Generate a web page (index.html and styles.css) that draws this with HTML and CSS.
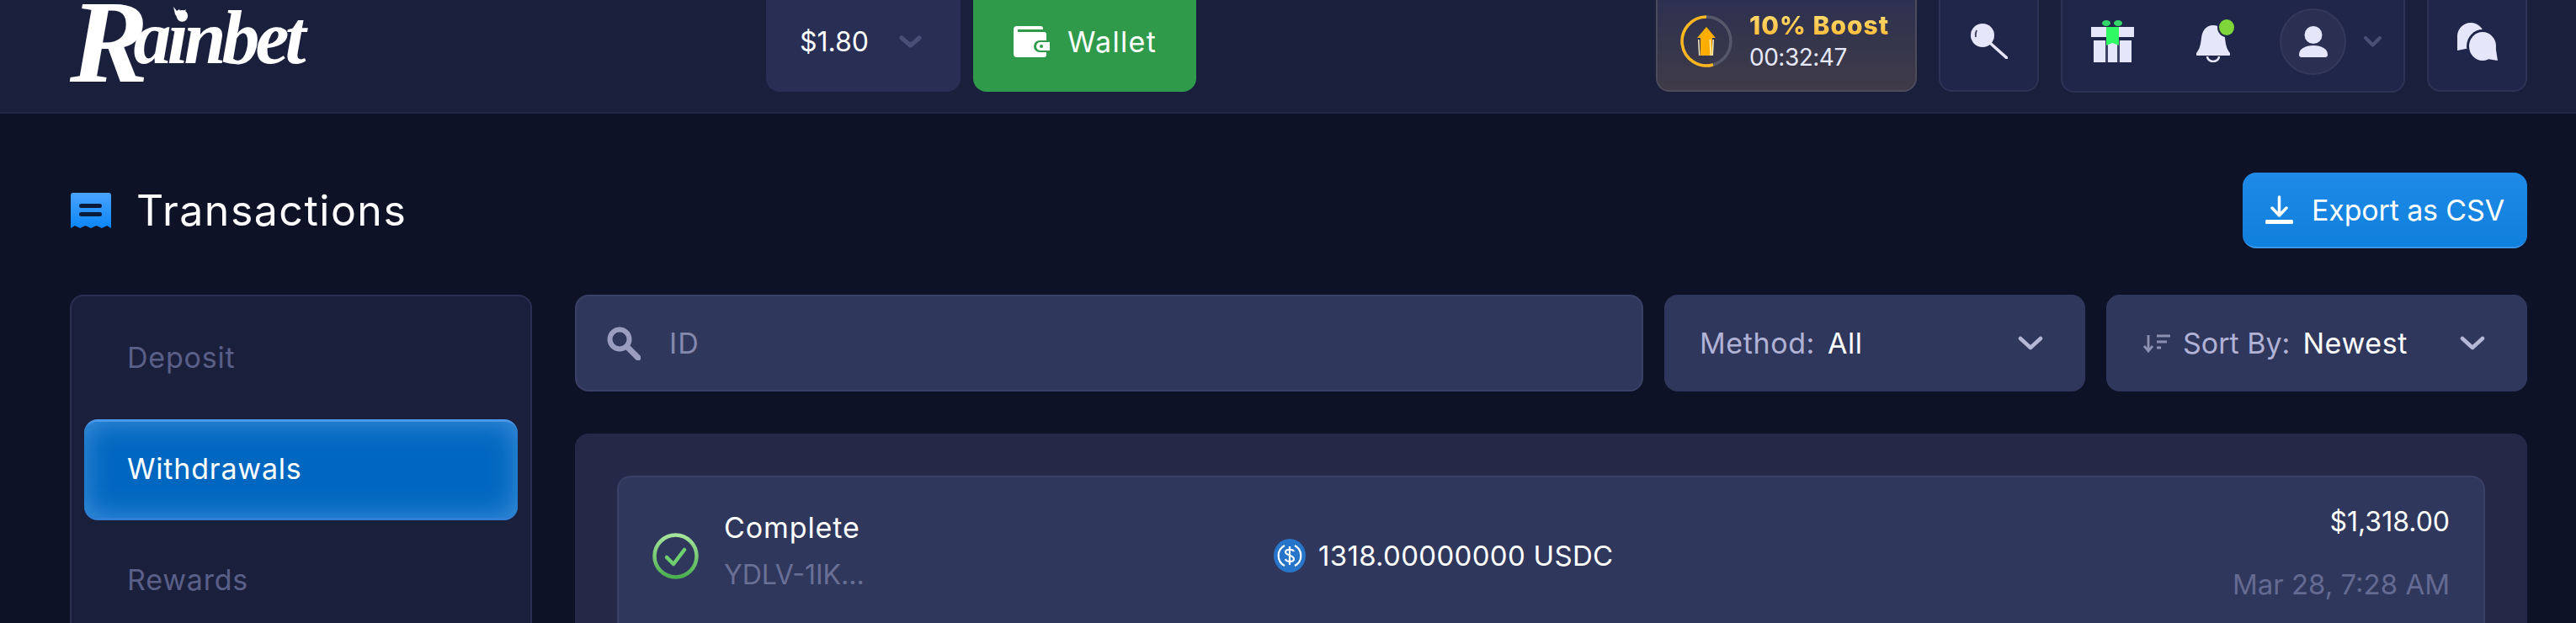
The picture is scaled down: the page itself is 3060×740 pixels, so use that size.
FILE: index.html
```html
<!DOCTYPE html>
<html lang="en">
<head>
<meta charset="utf-8">
<title>Transactions</title>
<link rel="stylesheet" href="styles.css">
</head>
<body>
<header class="topbar">
  <div class="logo">Rainbet
    <svg class="logo-crown" viewBox="0 0 18 13"><path d="M1 0l4 5 3-2 2 4 6-4-3 8-4 2H6L3 9z" fill="#fff"/></svg>
  </div>
  <div class="wallet-group">
    <div class="balance"><span>$1.80</span>
      <svg class="chev-dim" viewBox="0 0 27 15"><path d="M3 3l10.500 9L24 3" fill="none" stroke="#4a4f78" stroke-width="5" stroke-linecap="round" stroke-linejoin="round"/></svg>
    </div>
    <div class="wallet-btn">
      <svg class="wallet-icon" viewBox="0 0 43 37"><path d="M4 0h28a3 3 0 0 1 3 3v1H5v3h31a3 3 0 0 1 3 3v7H31a7 7 0 0 0 0 14h8v3a3 3 0 0 1-3 3H4a4 4 0 0 1-4-4V4a4 4 0 0 1 4-4z" fill="#fff"/><path d="M32 19h11v10H32a5 5 0 0 1 0-10z" fill="#fff"/><circle cx="33" cy="24" r="2" fill="#309a4b"/></svg>
      <span>Wallet</span>
    </div>
  </div>
  <div class="actions">
    <div class="boost">
      <svg class="boost-ring" viewBox="0 0 62 62">
        <circle cx="31" cy="31" r="29" fill="none" stroke="#55576a" stroke-width="3.500"/>
        <path d="M31 2A29 29 0 1 0 39 58.900" fill="none" stroke="#fdb71e" stroke-width="3.500"/>
        <path d="M31 14l11 13h-4v21H24V27h-4z" fill="#ffae00"/>
        <path d="M21 29l1 19h1.500l-1-19zM40 29l-1 19h-1.500l1-19zM34.500 29l1 19h1.500l-1-19z" fill="#fff0c0"/>
      </svg>
      <div class="boost-text">
        <div class="boost-title">10% Boost</div>
        <div class="boost-time">00:32:47</div>
      </div>
    </div>
    <div class="icon-btn search-btn">
      <svg class="lolly" viewBox="0 0 44 42"><path d="M24 24l19 17" stroke="#e6e6fa" stroke-width="3.500" stroke-linecap="round"/><circle cx="14" cy="14" r="14" fill="#e6e6fa"/><path d="M7 8q-2 4-1 8" stroke="#3a3f5e" stroke-width="1.800" fill="none"/></svg>
    </div>
    <div class="tools">
      <svg class="gift" viewBox="0 0 51 50">
        <path d="M0 8h51v12H0zM3 24h45v26H3z" fill="#e6e6fa"/>
        <path d="M17 24h3v26h-3zM31 24h3v26h-3z" fill="#3d4266"/>
        <path d="M18 8h15v22l-7.500-3-7.500 3z" fill="#2ffa63"/>
        <ellipse cx="18" cy="3.500" rx="5" ry="3.500" fill="#35d66b"/><ellipse cx="32" cy="3.500" rx="5" ry="3.500" fill="#35d66b"/>
      </svg>
      <div class="bell-wrap">
        <svg class="bell" viewBox="0 0 40 44"><path d="M20 0c9 0 13 7 14 15 1 9 2 13 6 18 1 2 0 3-2 3H2c-2 0-3-1-2-3 4-5 5-9 6-18C7 7 11 0 20 0z" fill="#e6e6fa"/><path d="M13 37a7 6 0 0 0 14 0" stroke="#e6e6fa" stroke-width="2.500" fill="none"/></svg>
        <span class="bell-dot"></span>
      </div>
      <div class="avatar">
        <svg class="person" viewBox="0 0 34 37"><circle cx="17" cy="10.500" r="10.500" fill="#e6e6fa"/><path d="M3 37a3 3 0 0 1-3-3c0-7 7-11 17-11s17 4 17 11a3 3 0 0 1-3 3z" fill="#e6e6fa"/></svg>
      </div>
      <svg class="chev-small" viewBox="0 0 21 13"><path d="M2 2l8.500 8.500L19 2" fill="none" stroke="#4a4f78" stroke-width="4" stroke-linecap="round" stroke-linejoin="round"/></svg>
    </div>
    <div class="icon-btn chat-btn">
      <svg class="chat" viewBox="0 0 48 45">
        <ellipse cx="16" cy="16" rx="16" ry="16" fill="#e6e6fa"/><path d="M0 14v19l10-2z" fill="#e6e6fa"/>
        <ellipse cx="30" cy="28" rx="17.500" ry="18.500" fill="#e6e6fa" stroke="#20264a" stroke-width="3"/>
        <path d="M45 26l3 19-12-2z" fill="#e6e6fa"/>
      </svg>
    </div>
  </div>
</header>

<main class="page">
  <div class="title-row">
    <div class="title">
      <svg class="title-icon" viewBox="0 0 49 42">
        <defs><linearGradient id="rcpt" x1="0" y1="0" x2="0" y2="1"><stop offset="0" stop-color="#4aa3ff"/><stop offset="1" stop-color="#0b86f5"/></linearGradient></defs>
        <path d="M3 0h43a3 3 0 0 1 3 3v39l-5-3-6 3-6.500-3-6.500 3-6.500-3-6.500 3-6-3-5 3V3a3 3 0 0 1 3-3z" fill="url(#rcpt)"/>
        <rect x="11" y="13" width="27" height="5" rx="2.500" fill="#0c1a3a"/><rect x="11" y="23" width="27" height="5" rx="2.500" fill="#0c1a3a"/>
      </svg>
      <h1>Transactions</h1>
    </div>
    <div class="export">
      <svg class="export-icon" viewBox="0 0 33 34"><path d="M16.500 2v21M8 15l8.500 9 8.500-9" fill="none" stroke="#fff" stroke-width="3.500" stroke-linecap="round" stroke-linejoin="round"/><rect x="0" y="29" width="33" height="5" rx="1.500" fill="#fff"/></svg>
      <span>Export as CSV</span>
    </div>
  </div>

  <div class="content">
    <nav class="sidebar">
      <div class="nav-item">Deposit</div>
      <div class="nav-item nav-active">Withdrawals</div>
      <div class="nav-item">Rewards</div>
    </nav>
    <section class="list">
      <div class="toolbar">
        <div class="search">
          <svg class="search-icon" viewBox="0 0 40 40"><circle cx="15" cy="15" r="11.500" fill="none" stroke="#9a9dc0" stroke-width="6"/><path d="M24 24l13 13" stroke="#9a9dc0" stroke-width="7" stroke-linecap="round"/></svg>
          <span>ID</span>
        </div>
        <div class="select">
          <div class="select-label"><span class="dim">Method:</span><span class="val">All</span></div>
          <svg class="chev" viewBox="0 0 30 17"><path d="M3 3l12 11L27 3" fill="none" stroke="#b6b8d8" stroke-width="4.500" stroke-linecap="round" stroke-linejoin="round"/></svg>
        </div>
        <div class="select select-sort">
          <div class="select-label">
            <svg class="sort-icon" viewBox="0 0 33 22"><path d="M7 1v18M2 14l5 6 5-6" fill="none" stroke="#8c8eb2" stroke-width="2.800"/><path d="M17 2h16M17 9h12M17 16h5" stroke="#8c8eb2" stroke-width="3"/></svg>
            <span class="dim">Sort By:</span><span class="val">Newest</span>
          </div>
          <svg class="chev" viewBox="0 0 30 17"><path d="M3 3l12 11L27 3" fill="none" stroke="#b6b8d8" stroke-width="4.500" stroke-linecap="round" stroke-linejoin="round"/></svg>
        </div>
      </div>
      <div class="panel">
        <div class="row">
          <div class="status">
            <svg class="check" viewBox="0 0 55 55">
              <defs><linearGradient id="chk" x1="0" y1="0" x2="0" y2="1"><stop offset="0" stop-color="#a6e59b"/><stop offset="1" stop-color="#4caf50"/></linearGradient></defs>
              <circle cx="27.500" cy="27.500" r="25" fill="none" stroke="url(#chk)" stroke-width="4.500"/>
              <path d="M17 29l8 8 13-17" fill="none" stroke="#6fd06f" stroke-width="4.500" stroke-linecap="round" stroke-linejoin="round"/>
            </svg>
            <div class="status-text">
              <div class="status-title">Complete</div>
              <div class="status-id">YDLV-1IK...</div>
            </div>
          </div>
          <div class="amount">
            <svg class="usdc" viewBox="0 0 38 40">
              <ellipse cx="19" cy="20" rx="19" ry="20" fill="#2775ca"/>
              <path d="M13 8a13.500 13.500 0 0 0 0 24M25 8a13.500 13.500 0 0 1 0 24" fill="none" stroke="#fff" stroke-width="2.200"/>
              <path d="M24 15c-1-3-9-3-10 0-1 5 10 4 10 9 0 4-9 4-10 0M19 9v22" fill="none" stroke="#fff" stroke-width="2.200"/>
            </svg>
            <span>1318.00000000 USDC</span>
          </div>
          <div class="meta">
            <div class="meta-usd">$1,318.00</div>
            <div class="meta-date">Mar 28, 7:28 AM</div>
          </div>
        </div>
      </div>
    </section>
  </div>
</main>
</body>
</html>
```
FILE: styles.css
```css
* { box-sizing: border-box; }
html, body { margin: 0; height: 740px; overflow: hidden; }
body {
  background: #0e1226;
  color: #fff;
  font-family: Inter, "Open Sans", sans-serif;
  font-size: 32px;
}
svg { display: block; flex: none; }

/* header */
.topbar {
  height: 135px;
  background: #1a1f3c;
  border-bottom: 2px solid #22274a;
  display: flex;
  align-items: flex-start;
  padding: 0 58px 0 83px;
  overflow: hidden;
}
.logo {
  position: relative;
  width: 279px;
  height: 98px;
  margin-right: 548px;
  font-family: "Liberation Serif", serif;
  font-size: 90px;
  font-style: italic;
  font-weight: 700;
  line-height: 90px;
  letter-spacing: -5px;
  color: #fff;
  white-space: nowrap;
}
.logo::first-letter {
  font-size: 140px;
  line-height: 60px;
  vertical-align: -22px;
  letter-spacing: 0;
  margin-right: -18px;
}
.logo-crown { position: absolute; left: 122px; top: 8px; width: 18px; height: 13px; }
.wallet-group { display: flex; gap: 15px; margin-top: -20px; }
.balance {
  width: 231px;
  height: 129px;
  padding: 9px 46px 0 40px;
  background: #292e55;
  border-radius: 0 0 16px 16px;
  display: flex;
  align-items: center;
  justify-content: space-between;
}
.chev-dim { width: 27px; height: 15px; }
.wallet-btn {
  width: 265px;
  height: 129px;
  padding: 9px 0 0 48px;
  background: #309a4b;
  border-radius: 16px;
  display: flex;
  align-items: center;
  gap: 21px;
  font-size: 34px;
  letter-spacing: 1.3px;
}
.wallet-icon { width: 43px; height: 37px; }
.actions { margin-left: auto; display: flex; gap: 26px; margin-top: -20px; }
.boost {
  width: 310px;
  height: 129px;
  padding: 9px 0 0 27px;
  background: linear-gradient(180deg, #2a2f52, #3f3b47);
  border: 2px solid #4b4b5c;
  border-radius: 16px;
  display: flex;
  align-items: center;
  gap: 20px;
}
.boost-ring { width: 62px; height: 62px; }
.boost-title {
  font-size: 30px;
  font-weight: 800;
  line-height: 38px;
  letter-spacing: 1px;
  background: linear-gradient(180deg, #ffe27a, #ffb52e);
  -webkit-background-clip: text;
  background-clip: text;
  color: transparent;
}
.boost-time { font-size: 28px; line-height: 38px; letter-spacing: -0.5px; color: #e6e8fa; }
.icon-btn {
  width: 119px;
  height: 129px;
  padding-top: 9px;
  background: #20264a;
  border: 2px solid #2d3355;
  border-radius: 16px;
  display: flex;
  align-items: center;
  justify-content: center;
}
.lolly { width: 44px; height: 42px; }
.tools {
  width: 409px;
  height: 130px;
  padding: 8px 0 0 34px;
  background: #20264a;
  border: 2px solid #2d3355;
  border-radius: 16px;
  display: flex;
  align-items: center;
}
.gift { width: 51px; height: 50px; }
.bell-wrap { position: relative; margin-left: 74px; margin-top: 6px; }
.bell { width: 40px; height: 44px; }
.bell-dot {
  position: absolute;
  left: 25px;
  top: -9px;
  width: 22px;
  height: 23px;
  border-radius: 50%;
  background: #7ed63a;
  border: 2px solid #20264a;
}
.avatar {
  width: 79px;
  height: 79px;
  margin-left: 59px;
  border-radius: 50%;
  background: #2b2f52;
  border: 2px solid #33385c;
  display: flex;
  align-items: center;
  justify-content: center;
}
.person { width: 34px; height: 37px; }
.chev-small { width: 21px; height: 13px; margin-left: 21px; }
.chat { width: 48px; height: 45px; }

/* page */
.page { padding: 0 58px 0 83px; }
.title-row {
  height: 90px;
  margin-top: 70px;
  display: flex;
  align-items: center;
  justify-content: space-between;
}
.title { display: flex; align-items: center; gap: 30px; }
.title-icon { width: 49px; height: 42px; }
.title h1 { margin: 0; font-size: 50px; font-weight: 400; line-height: 1; letter-spacing: 1.5px; }
.export {
  width: 338px;
  height: 90px;
  padding-left: 27px;
  background: linear-gradient(180deg, #1f8ae8, #0f80dc);
  border-bottom: 2px solid #3d95e6;
  border-radius: 16px;
  display: flex;
  align-items: center;
  gap: 22px;
  font-size: 34px;
  letter-spacing: -0.15px;
}
.export-icon { width: 33px; height: 34px; }
.content {
  margin-top: 55px;
  display: grid;
  grid-template-columns: 549px 1fr;
  gap: 51px;
}
.sidebar {
  height: 500px;
  padding: 14px 15px;
  background: #1a1f3c;
  border: 2px solid #2b3052;
  border-radius: 16px;
  display: flex;
  flex-direction: column;
  gap: 12px;
}
.nav-item {
  flex: none;
  height: 120px;
  padding: 0 0 4px 51px;
  display: flex;
  align-items: center;
  font-size: 34px;
  letter-spacing: 0.8px;
  color: #5a5f88;
  border-radius: 16px;
}
.nav-active {
  color: #fff;
  background: #0067c0;
  border-top: 3px solid #4a98ea;
  border-bottom: 3px solid #2f7fd8;
  box-shadow: inset 0 0 34px rgba(120, 180, 240, 0.55);
}
.toolbar { height: 115px; display: flex; gap: 25px; }
.search {
  flex: 1;
  padding-left: 36px;
  background: #30375c;
  border: 2px solid #3a4166;
  border-radius: 16px;
  display: flex;
  align-items: center;
  gap: 34px;
  font-size: 34px;
  letter-spacing: 1px;
  color: #8488ad;
}
.search-icon { width: 40px; height: 40px; }
.select {
  width: 500px;
  padding: 0 50px 0 42px;
  background: #30375c;
  border-radius: 16px;
  display: flex;
  align-items: center;
  justify-content: space-between;
  font-size: 34px;
}
.select-sort { padding-left: 43px; }
.select-label { display: flex; align-items: center; gap: 15px; letter-spacing: 0.6px; }
.select-sort .dim { letter-spacing: 0; }
.dim { color: #b0b2d6; }
.val { color: #fff; }
.chev { width: 30px; height: 17px; }
.sort-icon { width: 33px; height: 22px; }
.panel {
  margin-top: 50px;
  height: 400px;
  padding: 50px 50px 0;
  background: #252847;
  border-radius: 16px;
}
.row {
  height: 190px;
  padding: 0 40px;
  background: #30375c;
  border: 2px solid #3a4166;
  border-radius: 16px;
  display: grid;
  grid-template-columns: 738px 1fr auto;
  align-items: center;
}
.status { display: flex; align-items: center; gap: 30px; }
.check { width: 55px; height: 55px; }
.status-text { padding-bottom: 10px; }
.status-title { font-size: 34px; line-height: 56px; letter-spacing: 0.9px; }
.status-id { line-height: 56px; color: #6a6f96; }
.amount { display: flex; align-items: center; gap: 15px; font-size: 33px; letter-spacing: 0.3px; }
.usdc { width: 38px; height: 40px; }
.meta { text-align: right; padding-bottom: 6px; }
.meta-usd { line-height: 74px; }
.meta-date { font-size: 33px; line-height: 74px; color: #646a92; }
```
